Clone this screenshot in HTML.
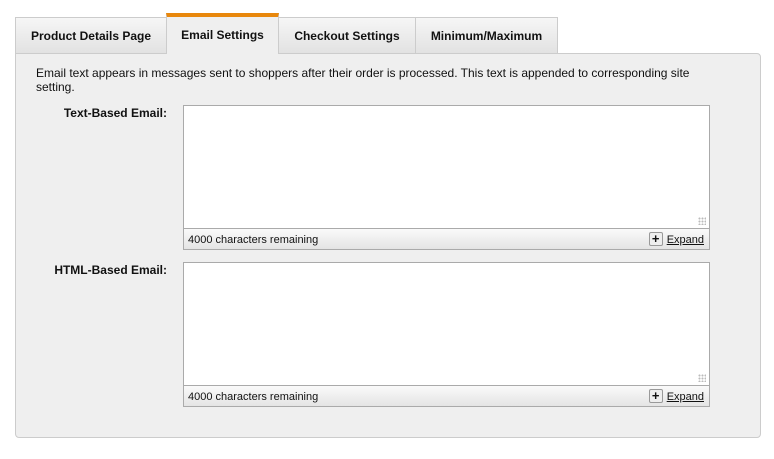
<!DOCTYPE html>
<html><head><style>
body{margin:0;width:774px;height:459px;background:#fff;font-family:"Liberation Sans",Arial,sans-serif;font-size:12px;color:#111;position:relative;overflow:hidden}
.tab{position:absolute;top:17px;height:36px;box-sizing:border-box;border:1px solid #ccc;border-bottom:none;background:linear-gradient(#f6f6f6,#e2e2e2);font-weight:bold;font-size:12px;text-align:center;line-height:36px}
.act{top:13px;height:41px;background:#efefef;border-left:1px solid #ccc;border-right:1px solid #ccc;border-top:4px solid #e8870c;line-height:36px;z-index:2}
.panel{position:absolute;left:15px;top:53px;width:746px;height:385px;box-sizing:border-box;border:1px solid #ccc;border-radius:0 4px 4px 4px;background:#efefef}
.lbl{position:absolute;font-weight:bold;text-align:right;width:153px;left:14px}
.ta{position:absolute;left:183px;width:527px;height:124px;box-sizing:border-box;border:1px solid #aaa;background:#fff}
.ft{position:absolute;left:183px;width:527px;height:21px;box-sizing:border-box;border:1px solid #aaa;border-top:none;background:linear-gradient(#fafafa,#e4e4e4);font-size:11px;line-height:22px;padding-left:4px}
.ex{position:absolute;right:5px;top:0;text-decoration:underline}
.pl{display:inline-block;width:12px;height:12px;border:1px solid #999;border-radius:2px;background:#eee;text-align:center;line-height:12px;font-weight:bold;font-size:13px;vertical-align:middle;margin-right:4px;margin-top:-2px}
.grip{position:absolute;right:3px;bottom:3px;width:8px;height:8px;background:radial-gradient(#bbb 0.8px,transparent 1.2px) 0 0/3px 3px}
</style></head><body>
<div class="tab" style="left:15px;width:152px">Product Details Page</div>
<div class="tab act" style="left:166px;width:113px">Email Settings</div>
<div class="tab" style="left:278px;width:138px">Checkout Settings</div>
<div class="tab" style="left:415px;width:143px">Minimum/Maximum</div>
<div class="panel"></div>
<div style="position:absolute;left:36px;top:66px;width:690px;line-height:14px">Email text appears in messages sent to shoppers after their order is processed. This text is appended to corresponding site setting.</div>
<div class="lbl" style="top:106px">Text-Based Email:</div>
<div class="ta" style="top:105px"><div class="grip"></div></div>
<div class="ft" style="top:229px">4000 characters remaining<span class="ex"><span class="pl">+</span>Expand</span></div>
<div class="lbl" style="top:263px">HTML-Based Email:</div>
<div class="ta" style="top:262px"><div class="grip"></div></div>
<div class="ft" style="top:386px">4000 characters remaining<span class="ex"><span class="pl">+</span>Expand</span></div>
</body></html>
